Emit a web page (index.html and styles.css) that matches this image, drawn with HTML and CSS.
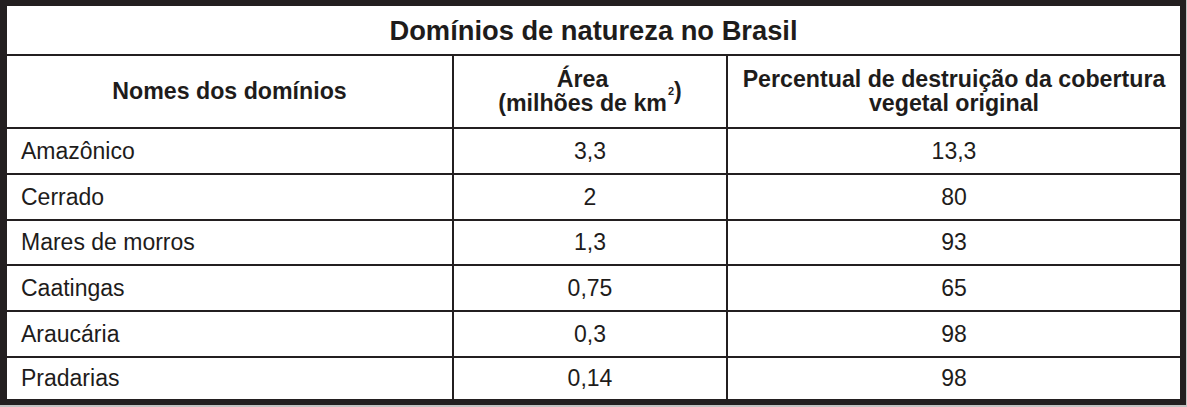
FILE: index.html
```html
<!DOCTYPE html>
<html lang="pt">
<head>
<meta charset="utf-8">
<title>Domínios de natureza no Brasil</title>
<link rel="stylesheet" href="styles.css">
</head>
<body>
<div class="frame">
  <div class="grid">
    <div class="cell title">Domínios de natureza no Brasil</div>
    <div class="cell head">Nomes dos domínios</div>
    <div class="cell head">Área<br>(milhões de km<sup>2</sup>)</div>
    <div class="cell head">Percentual de destruição da cobertura<br>vegetal original</div>

    <div class="cell name">Amazônico</div>
    <div class="cell num">3,3</div>
    <div class="cell num">13,3</div>

    <div class="cell name">Cerrado</div>
    <div class="cell num">2</div>
    <div class="cell num">80</div>

    <div class="cell name">Mares de morros</div>
    <div class="cell num">1,3</div>
    <div class="cell num">93</div>

    <div class="cell name">Caatingas</div>
    <div class="cell num">0,75</div>
    <div class="cell num">65</div>

    <div class="cell name">Araucária</div>
    <div class="cell num">0,3</div>
    <div class="cell num">98</div>

    <div class="cell name">Pradarias</div>
    <div class="cell num">0,14</div>
    <div class="cell num">98</div>
  </div>
</div>
</body>
</html>
```

FILE: styles.css
```css
html, body {
  margin: 0;
  padding: 0;
  background: #c2c2c2;
}

body {
  font-family: "Liberation Sans", Arial, sans-serif;
  color: #1e1c1b;
  width: 1187px;
  height: 407px;
}

.frame {
  width: 1186px;
  background: #231f20;
  padding: 6px 6px 6px 7px;
  box-sizing: border-box;
}

.grid {
  display: grid;
  grid-template-columns: 445px 272px 452px;
  grid-template-rows: 48px 71px 44px 44px 43px 44px 44px 41px;
  gap: 2px;
}

.cell {
  background: #ffffff;
  display: flex;
  align-items: center;
}

.title {
  grid-column: 1 / 4;
  justify-content: center;
  font-weight: bold;
  font-size: 27.3px;
  padding-top: 1px;
}

.head {
  justify-content: center;
  text-align: center;
  font-weight: bold;
  font-size: 23.2px;
  line-height: 24px;
  padding-bottom: 2px;
}

.head sup {
  font-size: 11px;
  line-height: 0;
  vertical-align: 6px;
  margin-left: 1px;
}

.name {
  font-size: 23px;
  padding-left: 14px;
}

.num {
  justify-content: center;
  font-size: 23px;
}
```
